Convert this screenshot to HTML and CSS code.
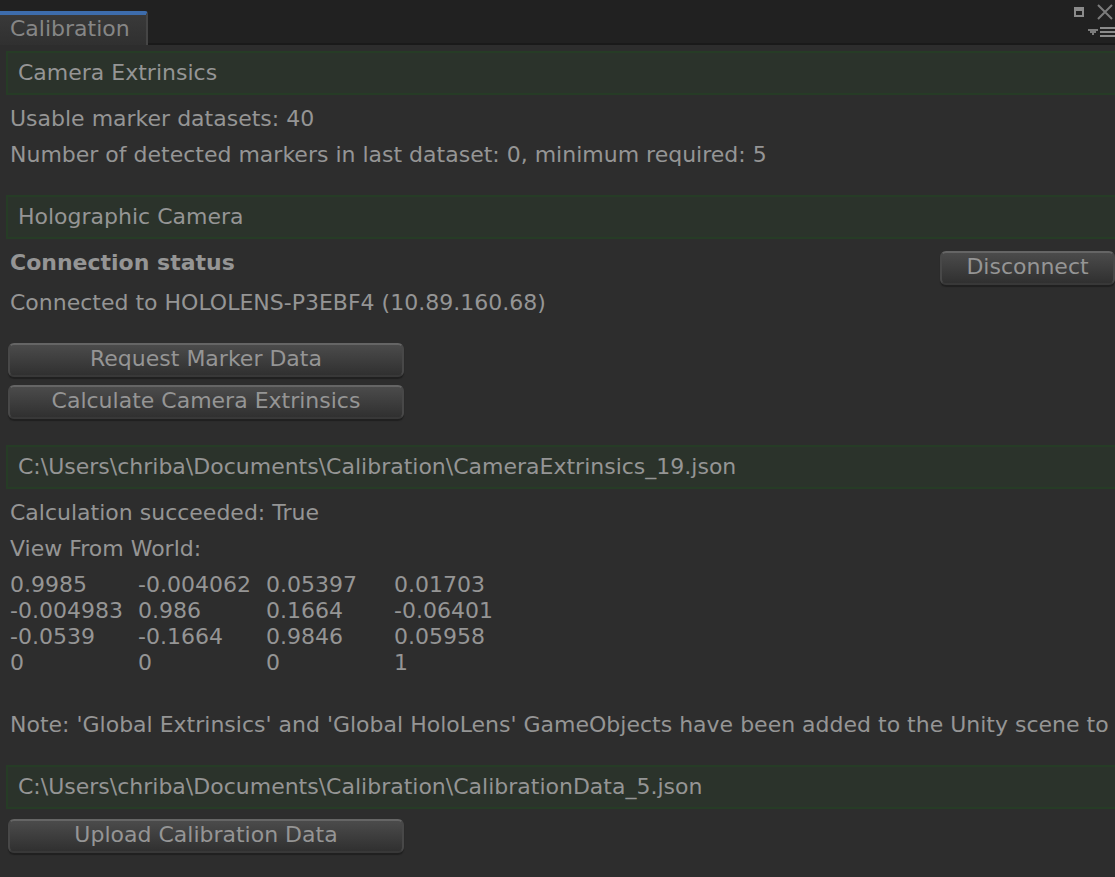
FILE: index.html
```html
<!DOCTYPE html>
<html lang="en">
<head>
<meta charset="utf-8">
<meta name="viewport" content="width=device-width, initial-scale=1">
<title>Calibration</title>
<link rel="stylesheet" href="styles.css">
</head>
<body>
<header class="titlebar">
  <div class="tab">Calibration</div>
  <div class="window-tools">
    <div class="window-row">
      <button class="icon-button" type="button" aria-label="Maximize">
        <svg width="12" height="12" viewBox="0 0 12 12"><path d="M1 1h10v10H1z M3 5v4h6V5z" fill="#8b8b8b" fill-rule="evenodd"/></svg>
      </button>
      <button class="icon-button" type="button" aria-label="Close">
        <svg width="16" height="16" viewBox="0 0 16 16"><path d="M1 1l14 14M15 1L1 15" stroke="#7c7c7c" stroke-width="2" fill="none"/></svg>
      </button>
    </div>
    <button class="icon-button" type="button" aria-label="Window menu">
      <svg width="27" height="12" viewBox="0 0 27 12"><path d="M0 3h10v2H8v2H6v2H4V7H2V5H0z" fill="#7c7c7c"/><path d="M12 1h15v2H12z M12 5h15v2H12z M12 9h15v2H12z" fill="#8b8b8b"/></svg>
    </button>
  </div>
</header>
<main class="panel">
  <section class="section">
    <h2 class="section-title">Camera Extrinsics</h2>
    <p class="line">Usable marker datasets: 40</p>
    <p class="line">Number of detected markers in last dataset: 0, minimum required: 5</p>
  </section>
  <section class="section section-actions">
    <h2 class="section-title">Holographic Camera</h2>
    <div class="status">
      <h3 class="status-title">Connection status</h3>
      <button class="button button-small" type="button">Disconnect</button>
    </div>
    <p class="line">Connected to HOLOLENS-P3EBF4 (10.89.160.68)</p>
    <div class="actions">
      <button class="button" type="button">Request Marker Data</button>
      <button class="button" type="button">Calculate Camera Extrinsics</button>
    </div>
  </section>
  <section class="section">
    <h2 class="section-title">C:\Users\chriba\Documents\Calibration\CameraExtrinsics_19.json</h2>
    <p class="line">Calculation succeeded: True</p>
    <p class="line" id="matrix-label">View From World:</p>
    <table class="matrix" aria-labelledby="matrix-label">
      <tr><td>0.9985</td><td>-0.004062</td><td>0.05397</td><td>0.01703</td></tr>
      <tr><td>-0.004983</td><td>0.986</td><td>0.1664</td><td>-0.06401</td></tr>
      <tr><td>-0.0539</td><td>-0.1664</td><td>0.9846</td><td>0.05958</td></tr>
      <tr><td>0</td><td>0</td><td>0</td><td>1</td></tr>
    </table>
    <p class="line">Note: 'Global Extrinsics' and 'Global HoloLens' GameObjects have been added to the Unity scene to</p>
  </section>
  <section class="section">
    <h2 class="section-title">C:\Users\chriba\Documents\Calibration\CalibrationData_5.json</h2>
    <div class="upload">
      <button class="button" type="button">Upload Calibration Data</button>
    </div>
  </section>
</main>
</body>
</html>
```
FILE: styles.css
```css
* { box-sizing: border-box; }

body {
  margin: 0;
  min-height: 100vh;
  background: #2d2d2d;
  color: #959595;
  font: 22px/36px "DejaVu Sans", sans-serif;
  overflow-x: hidden;
}

h2, h3, p { margin: 0; font-size: inherit; }

.titlebar {
  display: flex;
  justify-content: space-between;
  align-items: flex-end;
  height: 45px;
  background: #212121;
  box-shadow: inset 0 -2px #1a1a1a;
}

.tab {
  height: 34px;
  padding: 0 16px 0 10px;
  border-top: 4px solid #3d6cac;
  border-right: 2px solid #454545;
  border-top-right-radius: 3px;
  background: linear-gradient(#393939, #303030);
  color: #868686;
  line-height: 27px;
}

.window-tools {
  display: flex;
  flex-direction: column;
  align-items: flex-end;
  align-self: flex-start;
  gap: 6px;
  padding-top: 4px;
}

.window-row {
  display: flex;
  align-items: center;
  gap: 12px;
  padding-right: 2px;
}

.icon-button {
  display: flex;
  padding: 0;
  border: 0;
  background: none;
}

.panel { padding: 6px 0 0 6px; }

.section { margin-bottom: 22px; }

.section-actions { margin-bottom: 26px; }

.section-title {
  margin-bottom: 6px;
  padding: 2px 10px;
  border: 2px solid #263c26;
  border-right: 0;
  background: #2b332b;
  font-weight: 400;
  white-space: nowrap;
}

.line {
  padding-left: 4px;
  white-space: nowrap;
}

.status {
  display: flex;
  justify-content: space-between;
  align-items: flex-start;
  height: 40px;
}

.status-title { padding-left: 4px; }

.button {
  display: block;
  width: 396px;
  height: 34px;
  padding: 0 0 2px;
  border: 2px solid #484848;
  border-top-color: #656565;
  border-bottom-color: #383838;
  border-radius: 6px;
  background: linear-gradient(#4b4b4b, #303030);
  box-shadow: 0 2px 1px #202020;
  color: #959595;
  font: inherit;
  line-height: 26px;
}

.button-small {
  width: 175px;
  margin-top: 6px;
}

.actions {
  display: flex;
  flex-direction: column;
  gap: 8px;
  padding: 22px 0 0 2px;
}

.upload { padding: 4px 0 0 2px; }

.matrix {
  width: 512px;
  margin: 5px 0 31px 4px;
  border-collapse: collapse;
  table-layout: fixed;
  line-height: 26px;
}

.matrix td {
  padding: 0;
  white-space: nowrap;
}
```
